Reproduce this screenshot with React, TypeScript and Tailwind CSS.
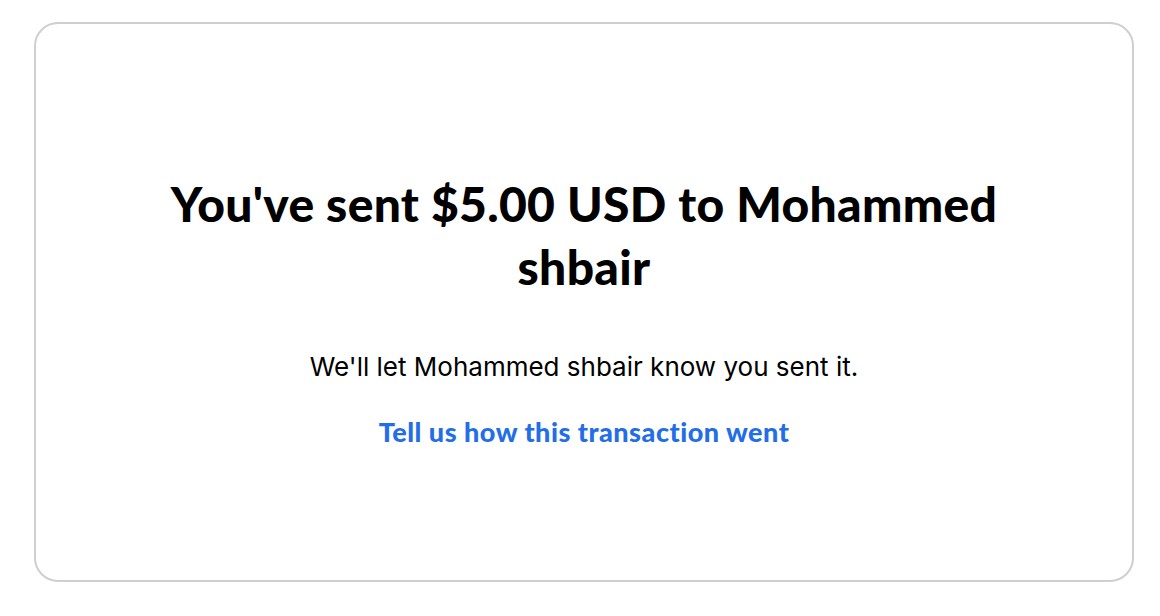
export default function App() {
  return (
    <div className="min-h-[616px] bg-white pt-[22px] pl-[34px] pr-[26px] pb-[34px]">
      <div className="flex h-[560px] flex-col items-center rounded-[24px] border-2 border-[#cfcfcf] px-16 pt-[148px] text-center">
        <h1 className="max-w-[900px] font-['Lato',sans-serif] text-[48px] font-black leading-[63px] tracking-[0.3px] text-black">
          You've sent $5.00 USD to Mohammed shbair
        </h1>
        <p className="mt-[53px] font-['Inter',sans-serif] text-[26px] leading-[32px] text-black">
          We'll let Mohammed shbair know you sent it.
        </p>
        <a
          href="#"
          className="mt-[33px] font-['Lato',sans-serif] text-[27px] font-black leading-[32px] tracking-[0.5px] text-[#236ee8]"
        >
          Tell us how this transaction went
        </a>
      </div>
    </div>
  )
}
